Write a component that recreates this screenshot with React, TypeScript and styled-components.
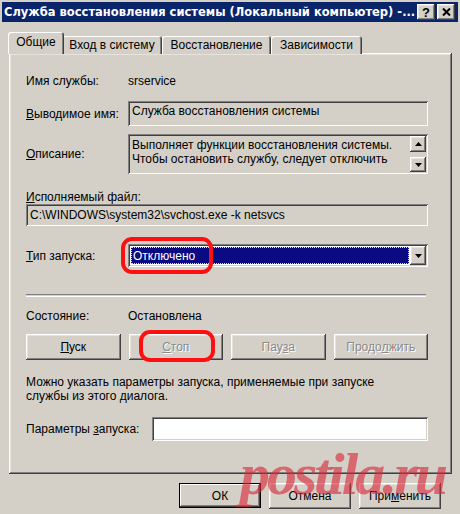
import React from 'react';
import styled, { createGlobalStyle, css } from 'styled-components';

const GlobalStyle = createGlobalStyle`
  html, body {
    margin: 0;
    padding: 0;
    background: #d4d0c8;
  }
  body {
    font-family: "Liberation Sans", Arial, sans-serif;
    font-size: 12px;
    color: #000;
  }
`;

const raised = css`
  box-shadow: inset -1px -1px #404040, inset 1px 1px #ffffff, inset -2px -2px #808080, inset 2px 2px #e6e3dc;
`;

const sunken = css`
  box-shadow: inset 1px 1px #808080, inset -1px -1px #ffffff, inset 2px 2px #404040, inset -2px -2px #d4d0c8;
`;

const Window = styled.div`
  position: relative;
  width: 460px;
  height: 514px;
  box-sizing: border-box;
  padding: 2px 2px 0;
  background: #d4d0c8;
  overflow: hidden;
`;

const TitleBar = styled.div`
  height: 20px;
  display: flex;
  align-items: center;
  gap: 2px;
  padding: 0 3px 0 2px;
  background: #0a246a;
`;

const Title = styled.div`
  flex: 1;
  color: #fff;
  font-family: "DejaVu Sans", Verdana, sans-serif;
  font-weight: bold;
  font-size: 11.5px;
  white-space: nowrap;
  overflow: hidden;
`;

const CaptionButton = styled.div`
  width: 18px;
  height: 16px;
  display: flex;
  align-items: center;
  justify-content: center;
  background: #d4d0c8;
  font-weight: bold;
  font-size: 13px;
  ${raised}
`;

const Body = styled.div`
  padding: 10px 6px 0 7px;
`;

const TabStrip = styled.div`
  display: flex;
  align-items: flex-end;
  height: 22px;
  padding-left: 1px;
  margin-bottom: -1px;
  position: relative;
  z-index: 1;
`;

const Tab = styled.div<{ $w: number; $active?: boolean }>`
  width: ${({ $w }) => $w}px;
  height: ${({ $active }) => ($active ? 22 : 18)}px;
  margin: 0 ${({ $active }) => ($active ? -2 : 0)}px;
  box-sizing: border-box;
  display: flex;
  align-items: center;
  justify-content: center;
  padding-bottom: ${({ $active }) => ($active ? 2 : 0)}px;
  background: #d4d0c8;
  border-radius: 3px 3px 0 0;
  box-shadow: inset 1px 1px #ffffff, inset -1px 0 #404040, inset -2px 0 #808080;
  white-space: nowrap;
  position: relative;
  z-index: ${({ $active }) => ($active ? 2 : 1)};
`;

const Panel = styled.div`
  height: 421px;
  box-sizing: border-box;
  padding: 20px 24px 0 17px;
  display: flex;
  flex-direction: column;
  ${raised}
`;

const Row = styled.div<{ $mt?: number; $h?: number }>`
  display: grid;
  grid-template-columns: 102px 1fr;
  align-items: center;
  margin-top: ${({ $mt }) => $mt ?? 0}px;
  height: ${({ $h }) => $h ?? 16}px;
`;

const Label = styled.div<{ $mt?: number }>`
  line-height: 14px;
  margin-top: ${({ $mt }) => $mt ?? 0}px;
  white-space: nowrap;
`;

const Mn = styled.span`
  text-decoration: underline;
`;

const Field = styled.div<{ $white?: boolean }>`
  height: 100%;
  box-sizing: border-box;
  padding: 3px 4px;
  background: ${({ $white }) => ($white ? '#ffffff' : '#d4d0c8')};
  white-space: nowrap;
  overflow: hidden;
  ${sunken}
`;

const ExeField = styled(Field)`
  height: 22px;
  padding: 4px 4px;
`;

const DescBox = styled.div`
  height: 100%;
  box-sizing: border-box;
  display: flex;
  padding: 2px 2px 2px 4px;
  ${sunken}
`;

const DescText = styled.div`
  flex: 1;
  line-height: 14px;
  padding-top: 2px;
  white-space: nowrap;
  overflow: hidden;
`;

const ScrollCol = styled.div`
  width: 16px;
  display: flex;
  flex-direction: column;
  justify-content: space-between;
`;

const ArrowButton = styled.div<{ $h?: number }>`
  width: 16px;
  height: ${({ $h }) => $h ?? 16}px;
  display: flex;
  align-items: center;
  justify-content: center;
  background: #d4d0c8;
  ${raised}
`;

const ComboWrap = styled.div`
  position: relative;
  height: 100%;
`;

const Combo = styled.div`
  height: 100%;
  box-sizing: border-box;
  display: flex;
  padding: 2px;
  background: #ffffff;
  ${sunken}
`;

const ComboValue = styled.div`
  flex: 1;
  margin: 1px;
  padding: 0 2px;
  display: flex;
  align-items: center;
  background: #0a0a82;
  color: #ffffff;
  outline: 1px dotted #e8e0a0;
  outline-offset: -1px;
`;

const Highlight = styled.div<{ $l: number; $t: number; $w: number; $h: number }>`
  position: absolute;
  left: ${({ $l }) => $l}px;
  top: ${({ $t }) => $t}px;
  width: ${({ $w }) => $w}px;
  height: ${({ $h }) => $h}px;
  box-sizing: border-box;
  border: 4px solid #ff1010;
  border-radius: 11px;
  pointer-events: none;
  z-index: 3;
`;

const Separator = styled.div<{ $mt: number }>`
  margin-top: ${({ $mt }) => $mt}px;
  height: 1px;
  border-top: 1px solid #808080;
  border-bottom: 1px solid #ffffff;
  margin-right: 2px;
`;

const ButtonRow = styled.div<{ $mt: number }>`
  margin-top: ${({ $mt }) => $mt}px;
  display: grid;
  grid-template-columns: repeat(4, 1fr);
  gap: 8px;
`;

const Button = styled.div<{ $disabled?: boolean; $default?: boolean; $w?: number }>`
  position: relative;
  height: ${({ $default }) => ($default ? 25 : 26)}px;
  ${({ $w }) => ($w ? `width: ${$w}px;` : '')}
  box-sizing: border-box;
  display: flex;
  align-items: center;
  justify-content: center;
  background: #d4d0c8;
  color: ${({ $disabled }) => ($disabled ? '#8a8a8a' : '#000')};
  text-shadow: ${({ $disabled }) => ($disabled ? '1px 1px #ffffff' : 'none')};
  ${({ $default }) =>
    $default
      ? css`
          box-shadow: inset 0 0 0 1px #000, inset -2px -2px #404040, inset 2px 2px #ffffff, inset -3px -3px #808080;
        `
      : raised}
`;

const Note = styled.div<{ $mt: number }>`
  margin-top: ${({ $mt }) => $mt}px;
  line-height: 14px;
`;

const ParamsRow = styled.div<{ $mt: number }>`
  margin-top: ${({ $mt }) => $mt}px;
  height: 24px;
  display: grid;
  grid-template-columns: 126px 1fr;
  align-items: center;
`;

const Footer = styled.div`
  display: flex;
  justify-content: flex-end;
  gap: 8px;
  margin-top: 9px;
  padding-right: 11px;
`;

const Watermark = styled.div`
  position: absolute;
  left: 240px;
  top: 444px;
  font-family: "Liberation Serif", "Times New Roman", serif;
  font-weight: bold;
  font-style: italic;
  font-size: 60px;
  line-height: 60px;
  letter-spacing: -3px;
  color: rgba(218, 40, 58, 0.62);
  pointer-events: none;
  white-space: nowrap;
  z-index: 5;
`;

const Tri = ({ up }: { up?: boolean }) => (
  <svg width="7" height="4" viewBox="0 0 7 4">
    <polygon points={up ? '3.5,0 7,4 0,4' : '0,0 7,0 3.5,4'} fill="#000" />
  </svg>
);

export default function App() {
  return (
    <>
      <GlobalStyle />
      <Window>
        <TitleBar>
          <Title>Служба восстановления системы (Локальный компьютер) -...</Title>
          <CaptionButton>?</CaptionButton>
          <CaptionButton>
            <svg width="9" height="8" viewBox="0 0 9 8">
              <path d="M1 0.5 L8 7.5 M8 0.5 L1 7.5" stroke="#000" strokeWidth="2" />
            </svg>
          </CaptionButton>
        </TitleBar>
        <Body>
          <TabStrip>
            <Tab $w={56} $active>
              Общие
            </Tab>
            <Tab $w={100}>Вход в систему</Tab>
            <Tab $w={109}>Восстановление</Tab>
            <Tab $w={91}>Зависимости</Tab>
          </TabStrip>
          <Panel>
            <Row>
              <Label>Имя службы:</Label>
              <div>srservice</div>
            </Row>
            <Row $mt={12} $h={25}>
              <Label>
                <Mn>В</Mn>ыводимое имя:
              </Label>
              <Field>Служба восстановления системы</Field>
            </Row>
            <Row $mt={8} $h={40}>
              <Label>
                <Mn>О</Mn>писание:
              </Label>
              <DescBox>
                <DescText>
                  Выполняет функции восстановления системы.
                  <br />
                  Чтобы остановить службу, следует отключить
                </DescText>
                <ScrollCol>
                  <ArrowButton>
                    <Tri up />
                  </ArrowButton>
                  <ArrowButton $h={15}>
                    <Tri />
                  </ArrowButton>
                </ScrollCol>
              </DescBox>
            </Row>
            <Label $mt={16}>
              <Mn>И</Mn>сполняемый файл:
            </Label>
            <ExeField>C:\WINDOWS\system32\svchost.exe -k netsvcs</ExeField>
            <Row $mt={18} $h={23}>
              <Label>
                <Mn>Т</Mn>ип запуска:
              </Label>
              <ComboWrap>
                <Combo>
                  <ComboValue>Отключено</ComboValue>
                  <ArrowButton $h={19}>
                    <Tri />
                  </ArrowButton>
                </Combo>
                <Highlight $l={-7} $t={-7} $w={92} $h={37} />
              </ComboWrap>
            </Row>
            <Separator $mt={27} />
            <Row $mt={11}>
              <Label>Состояние:</Label>
              <div>Остановлена</div>
            </Row>
            <ButtonRow $mt={10}>
              <Button>
                <Mn>П</Mn>уск
              </Button>
              <Button $disabled>
                <Mn>С</Mn>топ
                <Highlight $l={10} $t={-4} $w={76} $h={32} />
              </Button>
              <Button $disabled>
                Пау<Mn>з</Mn>а
              </Button>
              <Button $disabled>
                Продо<Mn>л</Mn>жить
              </Button>
            </ButtonRow>
            <Note $mt={15}>
              Можно указать параметры запуска, применяемые при запуске
              <br />
              службы из этого диалога.
            </Note>
            <ParamsRow $mt={14}>
              <Label>
                Параметры <Mn>з</Mn>апуска:
              </Label>
              <Field $white />
            </ParamsRow>
          </Panel>
          <Footer>
            <Button $default $w={82}>
              ОК
            </Button>
            <Button $w={82}>Отмена</Button>
            <Button $w={82}>
              При<Mn>м</Mn>енить
            </Button>
          </Footer>
        </Body>
        <Watermark>postila.ru</Watermark>
      </Window>
    </>
  );
}
